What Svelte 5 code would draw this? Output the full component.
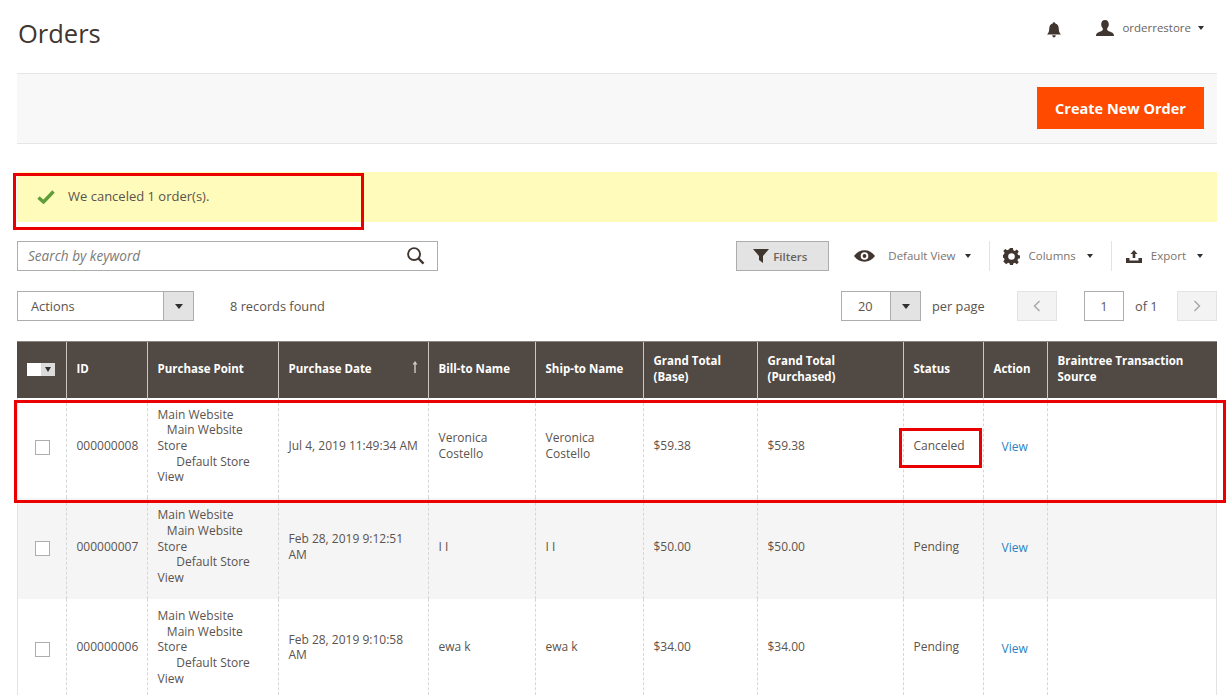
<script>
  const rows = [
    { id: '000000008', date: 'Jul 4, 2019 11:49:34 AM', bill: 'Veronica Costello', total: '$59.38', status: 'Canceled' },
    { id: '000000007', date: 'Feb 28, 2019 9:12:51 AM', bill: 'I I', total: '$50.00', status: 'Pending' },
    { id: '000000006', date: 'Feb 28, 2019 9:10:58 AM', bill: 'ewa k', total: '$34.00', status: 'Pending' }
  ];
  const cols = [49, 81, 131, 150, 107, 108, 114, 146, 80, 64, 170];
</script>

<div class="page">
  <header class="top">
    <h1>Orders</h1>
    <div class="user">
      <svg class="bell" viewBox="0 0 16 18"><path d="M8 0c1 0 1.500.7 1.500 1.500C12.500 2.300 13.500 5 13.500 8c0 3 1 4.500 2.500 6H0c1.500-1.500 2.500-3 2.500-6 0-3 1-5.700 4-6.500C6.500.7 7 0 8 0zM6 15h4c0 1.500-1 2.500-2 2.500S6 16.500 6 15z"/></svg>
      <svg class="person" viewBox="0 0 18 16"><path d="M9 0c2.600 0 3.800 2 3.800 4.300 0 2-.9 3.400-1.800 4.400 0 1.300.7 2 2.500 2.700 2.500.9 4.500 1.600 4.500 4.600H0c0-3 2-3.700 4.500-4.600C6.300 10.700 7 10 7 8.700 6.100 7.700 5.200 6.300 5.200 4.300 5.200 2 6.400 0 9 0z"/></svg>
      <span class="uname">orderrestore</span>
      <i class="caret small"></i>
    </div>
  </header>

  <div class="actionbar"><button class="create">Create New Order</button></div>

  <div class="message">
    <svg class="check" viewBox="0 0 18 14"><path d="M1.500 7.500 6.500 12 16.500 1.500" fill="none" stroke="#5f9c3a" stroke-width="3.400"/></svg>
    <span>We canceled 1 order(s).</span>
  </div>

  <div class="toolbar">
    <div class="search">
      <span>Search by keyword</span>
      <svg viewBox="0 0 20 20"><circle cx="8.500" cy="8.500" r="6.300" fill="none" stroke="#41362f" stroke-width="2"/><path d="M13 13l5.500 5.500" stroke="#41362f" stroke-width="2.400"/></svg>
    </div>
    <div class="tools">
      <button class="filters">
        <svg viewBox="0 0 16 14"><path d="M0 0h16L10 7v7L6 11V7z" fill="#41362f"/></svg>
        Filters
      </button>
      <div class="tool view">
        <svg class="eye" viewBox="0 0 22 12"><path d="M0 6C3 2 6.500 0 11 0s8 2 11 6c-3 4-6.500 6-11 6S3 10 0 6zm11-4a4 4 0 1 0 0 8 4 4 0 0 0 0-8zm0 2a2 2 0 1 1 0 4 2 2 0 0 1 0-4z" fill="#41362f" fill-rule="evenodd"/></svg>
        <span>Default View</span><i class="caret small"></i>
      </div>
      <div class="tool cols">
        <svg class="gear" viewBox="0 0 18 18"><path d="M7.500 0h3l.4 2.400 1.700.7 2-1.400 2.100 2.100-1.400 2 .7 1.700 2 .4v3l-2 .4-.7 1.700 1.400 2-2.100 2.100-2-1.400-1.700.7-.4 2.100h-3l-.4-2.100-1.700-.7-2 1.400L.3 14.300l1.400-2-.7-1.700-1-.4v-3l1-.4.700-1.700-1.400-2 2.100-2.100 2 1.400 1.700-.7zM9 5.500a3.500 3.500 0 1 0 0 7 3.500 3.500 0 0 0 0-7z" fill="#41362f" fill-rule="evenodd"/></svg>
        <span>Columns</span><i class="caret small"></i>
      </div>
      <div class="tool export">
        <svg class="exp" viewBox="0 0 16 13"><path d="M8 0l3.500 4H9.300v4H6.700V4H4.500zM0 8h3.500v2.500h9V8H16v5H0z" fill="#41362f"/></svg>
        <span>Export</span><i class="caret small"></i>
      </div>
    </div>
  </div>

  <div class="pager">
    <div class="select actions"><span>Actions</span><b><i class="caret"></i></b></div>
    <span class="found">8 records found</span>
    <div class="spacer"></div>
    <div class="select perpage"><span>20</span><b><i class="caret"></i></b></div>
    <span class="pp">per page</span>
    <button class="nav prev"><svg viewBox="0 0 8 12"><path d="M6.500 1 1.500 6l5 5" fill="none" stroke="#a8a5a2" stroke-width="1.400"/></svg></button>
    <div class="pageinput">1</div>
    <span class="of">of 1</span>
    <button class="nav"><svg viewBox="0 0 8 12"><path d="M1.500 1l5 5-5 5" fill="none" stroke="#a8a5a2" stroke-width="1.400"/></svg></button>
  </div>

  <table>
    <colgroup>
      {#each cols as w}<col style="width:{w}px" />{/each}
    </colgroup>
    <thead>
      <tr>
        <th class="sel"><div class="hsel"><u></u><b><i class="caret"></i></b></div></th>
        <th>ID</th>
        <th>Purchase Point</th>
        <th class="sorted">Purchase Date<svg viewBox="0 0 6 12"><path d="M3 0 5.500 3.500H3.700V12H2.300V3.500H.5z" fill="#cfcac6"/></svg></th>
        <th>Bill-to Name</th>
        <th>Ship-to Name</th>
        <th>Grand Total (Base)</th>
        <th>Grand Total (Purchased)</th>
        <th>Status</th>
        <th>Action</th>
        <th>Braintree Transaction Source</th>
      </tr>
    </thead>
    <tbody>
      {#each rows as r}
        <tr>
          <td class="cb"><span class="box"></span></td>
          <td>{r.id}</td>
          <td class="point">Main Website<br />&nbsp;&nbsp;&nbsp;Main Website Store<br />&nbsp;&nbsp;&nbsp;&nbsp;&nbsp;&nbsp;Default Store View</td>
          <td>{r.date}</td>
          <td>{r.bill}</td>
          <td>{r.bill}</td>
          <td>{r.total}</td>
          <td>{r.total}</td>
          <td>{r.status}</td>
          <td class="act"><a href="#top">View</a></td>
          <td></td>
        </tr>
      {/each}
    </tbody>
  </table>

  <div class="mark m1"></div>
  <div class="mark m2"></div>
  <div class="mark m3"></div>
</div>

<style>
  :global(body) { margin: 0; background: #fff; overflow: hidden; }
  .page {
    position: relative; box-sizing: border-box; width: 1227px; height: 695px; overflow: hidden;
    padding: 0 10px 0 17px; font: 12px/15.700px "Open Sans", sans-serif; color: #5b534d;
  }
  .top { display: flex; justify-content: space-between; height: 73px; }
  h1 { margin: 16px 0 0 1px; font-size: 25.500px; font-weight: 400; line-height: 34px; color: #41362f; }
  .user { display: flex; align-items: center; height: 56px; color: #6a635d; font-size: 11.500px; padding-right: 13px; }
  .bell { width: 14px; height: 16px; fill: #41362f; margin: 4px 35px 0 1px; }
  .person { width: 18px; height: 16px; fill: #41362f; margin-right: 8px; }
  .uname { margin-right: 7px; }
  .caret { display: inline-block; width: 0; height: 0; border: 4px solid transparent; border-top: 5px solid #303030; border-bottom: 0; }
  .caret.small { border-width: 3.500px; border-top-width: 4.500px; border-bottom-width: 0; }

  .actionbar {
    box-sizing: border-box; height: 71px; background: #f8f8f8; border: solid #e6e6e6; border-width: 1px 0;
    display: flex; justify-content: flex-end; align-items: center; padding: 0 13px 1px 0;
  }
  .create {
    width: 167px; height: 42px; border: 0; background: #ff4a00; color: #fff; padding: 0;
    font: 700 14.500px "Open Sans", sans-serif;
  }

  .message {
    margin-top: 28px; height: 50px; background: #fffbbb; display: flex; align-items: center; padding: 0 0 0 20px;
    box-sizing: border-box; color: #5b534d; font-size: 13px;
  }
  .check { width: 18px; height: 14px; margin-right: 13px; }

  .toolbar { display: flex; justify-content: space-between; margin-top: 19px; height: 30px; }
  .search {
    box-sizing: border-box; width: 421px; border: 1px solid #adadad; display: flex; justify-content: space-between;
    align-items: center; padding: 0 12px 0 10px; font-style: italic; font-size: 13.600px; color: #7a7a7a;
  }
  .search svg { width: 19px; height: 19px; margin-top: -1px; }
  .tools { display: flex; align-items: center; }
  .filters {
    box-sizing: border-box; width: 93px; height: 30px; background: #e3e3e3; border: 1px solid #adadad; padding: 0 5px 0 0;
    display: flex; align-items: center; justify-content: center; gap: 4px;
    font: 600 11.500px "Open Sans", sans-serif; color: #6a635d;
  }
  .filters svg { width: 16px; height: 14px; }
  .tool { display: flex; align-items: center; height: 30px; font-size: 11.500px; color: #7a736d; box-sizing: border-box; }
  .view { margin-left: 25px; padding-right: 18px; }
  .eye { width: 21px; height: 12px; margin-right: 13px; }
  .view span { margin-right: 9px; }
  .cols { border-left: 1px solid #e3e3e3; padding: 0 18px 0 13px; }
  .gear { width: 17px; height: 17px; margin-right: 9px; }
  .cols span { margin-right: 11px; }
  .export { border-left: 1px solid #e3e3e3; padding-left: 14px; padding-right: 14px; }
  .exp { width: 16px; height: 13px; margin-right: 9px; }
  .export span { margin-right: 11px; }

  .pager { display: flex; align-items: center; margin-top: 20px; height: 30px; }
  .select { box-sizing: border-box; display: flex; height: 30px; border: 1px solid #adadad; }
  .select span { flex: 1; align-self: center; padding-top: 1px; }
  .select b { width: 29px; background: #e3e3e3; border-left: 1px solid #adadad; display: flex; align-items: center; justify-content: center; }
  .actions { width: 177px; }
  .actions span { padding-left: 13px; font-size: 12.800px; }
  .found { margin: 1px 0 0 36px; font-size: 12.800px; }
  .spacer { flex: 1; }
  .perpage { width: 80px; }
  .perpage span { padding-left: 16px; font-size: 12.800px; }
  .pp { margin: 1px 0 0 11px; width: 85px; font-size: 12.800px; }
  .nav { box-sizing: border-box; width: 40px; height: 30px; background: #f3f3f3; border: 1px solid #e3e3e3; padding: 0; display: flex; align-items: center; justify-content: center; }
  .nav svg { width: 8px; height: 12px; }
  .pageinput { box-sizing: border-box; width: 40px; height: 30px; margin-left: 27px; border: 1px solid #adadad; text-align: center; line-height: 29px; }
  .of { margin: 1px 0 0 11px; width: 42px; font-size: 12.800px; }

  table { margin-top: 20px; width: 1200px; table-layout: fixed; border-collapse: collapse; }
  th {
    box-sizing: border-box; height: 56px; background: #514943; color: #fff; font-weight: 700; font-size: 11.500px; line-height: 16px;
    text-align: left; padding: 0 10px 2px; border-left: 1px solid #c9c6c3; border-top: 1px solid #8a837f; position: relative;
  }
  th:first-child { border-left: 0; }
  .sorted svg { position: absolute; right: 10px; top: 19px; width: 6px; height: 12px; }
  .hsel { display: flex; width: 28px; height: 13px; margin-top: 2px; }
  .hsel u { width: 14px; background: #fff; }
  .hsel b { width: 14px; background: #dcdcdc; display: flex; align-items: center; justify-content: center; }
  .hsel .caret { border-width: 3.500px; border-top-width: 5px; border-bottom-width: 0; }
  td {
    box-sizing: border-box; height: 100.700px; padding: 9px 8px 13px 10px; border-left: 1px dashed #d6d6d6; vertical-align: middle;
  }
  td:first-child { border-left: 0; box-shadow: inset 1px 0 #e3e3e3; }
  td:last-child { box-shadow: inset -1px 0 #e3e3e3; }
  th.sel { padding-left: 10px; }
  tbody tr:nth-child(even) td { background: #f5f5f5; }
  .cb { padding-left: 18px; }
  .box { display: block; box-sizing: border-box; width: 15px; height: 15px; background: #fff; border: 1px solid #adadad; margin-top: 4px; }
  .act { padding: 12px 0 13px 18px; }
  .act a { color: #2b83c4; text-decoration: none; }

  .mark { position: absolute; box-sizing: border-box; border: 3px solid #ea0000; pointer-events: none; }
  .m1 { left: 13px; top: 173px; width: 351px; height: 57px; }
  .m2 { left: 14px; top: 400px; width: 1212px; height: 103px; }
  .m3 { left: 899px; top: 428px; width: 83px; height: 40px; }
</style>
